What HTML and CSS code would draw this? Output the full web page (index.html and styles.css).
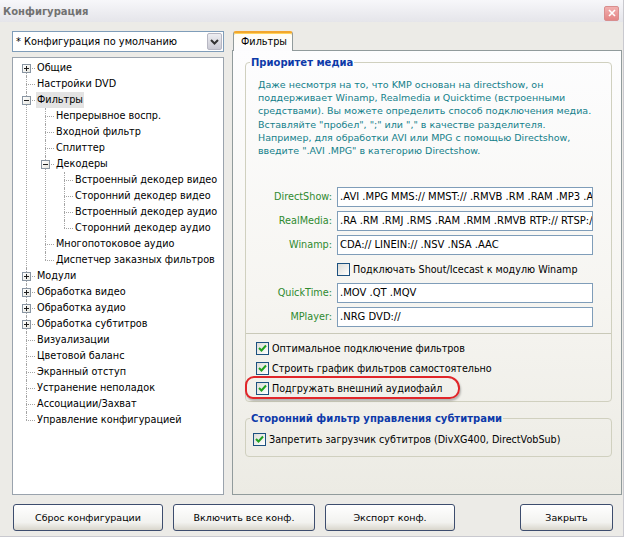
FILE: index.html
```html
<!DOCTYPE html>
<html lang="ru">
<head>
<meta charset="utf-8">
<title>Конфигурация</title>
<link rel="stylesheet" href="styles.css">
</head>
<body>
<div class="window">
  <div class="titlebar">
    <span class="title">Конфигурация</span>
    <span class="close"><svg width="8" height="8" viewBox="0 0 8 8"><path d="M1 1L7 7M7 1L1 7" stroke="#fff" stroke-width="1.6"/></svg></span>
  </div>
  <div class="main">
    <div class="left">
      <div class="combo">
        <span class="combo-text">* Конфигурация по умолчанию</span>
        <span class="combo-btn"><svg width="9" height="6" viewBox="0 0 9 6"><path d="M1 1L4.5 4.5L8 1" fill="none" stroke="#333" stroke-width="2"/></svg></span>
      </div>
      <div class="tree">
        <ul class="root">
          <li><span class="exp plus"></span><span class="lbl">Общие</span></li>
          <li><span class="lbl">Настройки DVD</span></li>
          <li><span class="exp minus"></span><span class="lbl sel">Фильтры</span>
            <ul>
              <li><span class="lbl">Непрерывное воспр.</span></li>
              <li><span class="lbl">Входной фильтр</span></li>
              <li><span class="lbl">Сплиттер</span></li>
              <li><span class="exp minus"></span><span class="lbl">Декодеры</span>
                <ul>
                  <li><span class="lbl">Встроенный декодер видео</span></li>
                  <li><span class="lbl">Сторонний декодер видео</span></li>
                  <li><span class="lbl">Встроенный декодер аудио</span></li>
                  <li><span class="lbl">Сторонний декодер аудио</span></li>
                </ul>
              </li>
              <li><span class="lbl">Многопотоковое аудио</span></li>
              <li><span class="lbl">Диспетчер заказных фильтров</span></li>
            </ul>
          </li>
          <li><span class="exp plus"></span><span class="lbl">Модули</span></li>
          <li><span class="exp plus"></span><span class="lbl">Обработка видео</span></li>
          <li><span class="exp plus"></span><span class="lbl">Обработка аудио</span></li>
          <li><span class="exp plus"></span><span class="lbl">Обработка субтитров</span></li>
          <li><span class="lbl">Визуализации</span></li>
          <li><span class="lbl">Цветовой баланс</span></li>
          <li><span class="lbl">Экранный отступ</span></li>
          <li><span class="lbl">Устранение неполадок</span></li>
          <li><span class="lbl">Ассоциации/Захват</span></li>
          <li><span class="lbl">Управление конфигурацией</span></li>
        </ul>
      </div>
    </div>
    <div class="right">
      <div class="tabs"><div class="tab">Фильтры</div></div>
      <div class="panel">
        <fieldset class="group g1">
          <legend>Приоритет медиа</legend>
          <p class="desc">Даже несмотря на то, что KMP основан на directshow, он<br>поддерживает Winamp, Realmedia и Quicktime (встроенными<br>средствами). Вы можете определить способ подключения медиа.<br>Вставляйте "пробел", ";" или "," в качестве разделителя.<br>Например, для обработки AVI или MPG с помощью Directshow,<br>введите ".AVI .MPG" в категорию Directshow.</p>
          <div class="form">
            <span class="flabel">DirectShow:</span><div class="input">.AVI .MPG MMS:// MMST:// .RMVB .RM .RAM .MP3 .AAC .OGG</div>
            <span class="flabel">RealMedia:</span><div class="input">.RA .RM .RMJ .RMS .RAM .RMM .RMVB RTP:// RTSP://</div>
            <span class="flabel">Winamp:</span><div class="input">CDA:// LINEIN:// .NSV .NSA .AAC</div>
            <span></span><label class="check"><span class="box"></span>Подключать Shout/Icecast к модулю Winamp</label>
            <span class="flabel">QuickTime:</span><div class="input">.MOV .QT .MQV</div>
            <span class="flabel">MPlayer:</span><div class="input">.NRG DVD://</div>
          </div>
          <div class="sep"></div>
          <div class="checks">
            <label class="check"><span class="box on"><svg width="9" height="8" viewBox="0 0 9 8"><path d="M1 4L3.5 6.5L8 1.5" fill="none" stroke="#21a121" stroke-width="2"/></svg></span>Оптимальное подключение фильтров</label>
            <label class="check"><span class="box on"><svg width="9" height="8" viewBox="0 0 9 8"><path d="M1 4L3.5 6.5L8 1.5" fill="none" stroke="#21a121" stroke-width="2"/></svg></span>Строить график фильтров самостоятельно</label>
            <label class="check marked"><span class="box on"><svg width="9" height="8" viewBox="0 0 9 8"><path d="M1 4L3.5 6.5L8 1.5" fill="none" stroke="#21a121" stroke-width="2"/></svg></span>Подгружать внешний аудиофайл<span class="ring"></span></label>
          </div>
        </fieldset>
        <fieldset class="group g2">
          <legend>Сторонний фильтр управления субтитрами</legend>
          <label class="check"><span class="box on"><svg width="9" height="8" viewBox="0 0 9 8"><path d="M1 4L3.5 6.5L8 1.5" fill="none" stroke="#21a121" stroke-width="2"/></svg></span>Запретить загрузчик субтитров (DivXG400, DirectVobSub)</label>
        </fieldset>
      </div>
    </div>
  </div>
  <div class="buttons">
    <button class="btn b1">Сброс конфигурации</button>
    <button class="btn b2">Включить все конф.</button>
    <button class="btn b3">Экспорт конф.</button>
    <button class="btn b4">Закрыть</button>
  </div>
</div>
</body>
</html>
```

FILE: styles.css
```css
html, body {
  margin: 0;
  padding: 0;
  background: #ffffff;
}
body {
  font-family: "DejaVu Sans", "Liberation Sans", sans-serif;
  font-size: 9.7px;
  color: #000;
}
.window {
  width: 624px;
  height: 537px;
  background: #ecebe7;
  display: flex;
  flex-direction: column;
  overflow: hidden;
  border-right: 1px solid #c9c9cf;
  border-bottom: 1px solid #c9c9cf;
  box-sizing: border-box;
}
.titlebar {
  height: 22px;
  flex: none;
  background: linear-gradient(#f7f7fa, #e5e5ea);
  display: flex;
  align-items: center;
  justify-content: space-between;
  padding: 0 4px 0 3px;
  box-sizing: border-box;
}
.title {
  font-weight: bold;
  font-size: 10px;
  color: #727272;
}
.close {
  width: 15px;
  height: 15px;
  box-sizing: border-box;
  background: linear-gradient(#f2b1b1, #e48585);
  border: 1px solid #d88e8e;
  border-radius: 2px;
  display: flex;
  align-items: center;
  justify-content: center;
  margin-top: 4px;
}
.main {
  display: flex;
  gap: 8px;
  padding: 9px 0 0 12px;
}
.left {
  width: 212px;
  display: flex;
  flex-direction: column;
  gap: 5px;
}
.combo {
  height: 21px;
  box-sizing: border-box;
  border: 1px solid #7f9db9;
  background: #fff;
  display: flex;
  align-items: center;
  padding: 0 1px 0 3px;
  font-size: 9.8px;
}
.combo-btn {
  margin-left: auto;
  width: 15px;
  height: 17px;
  box-sizing: border-box;
  background: linear-gradient(#eeeef2, #c9c9d3);
  border: 1px solid #b7b7c3;
  border-radius: 2px;
  display: flex;
  align-items: center;
  justify-content: center;
}
.tree {
  height: 438px;
  box-sizing: border-box;
  border: 1px solid #9aa3ad;
  background: #fff;
  padding-top: 2px;
  font-size: 9.7px;
}
.tree ul {
  list-style: none;
  margin: 0;
  padding: 0 0 0 8px;
}
.tree ul.root {
  padding-left: 13px;
}
.tree li {
  position: relative;
  padding-left: 11px;
}
.tree li::before {
  content: "";
  position: absolute;
  left: 0;
  top: 8px;
  width: 9px;
  border-top: 1px dotted #a5a5a5;
}
.tree li::after {
  content: "";
  position: absolute;
  left: 0;
  top: 0;
  bottom: 0;
  border-left: 1px dotted #a5a5a5;
}
.tree li:last-child::after {
  bottom: auto;
  height: 8px;
}
.tree ul.root > li:first-child::after {
  top: 8px;
}
.lbl {
  display: inline-block;
  height: 16px;
  line-height: 16px;
  padding: 0 1px;
  margin-left: -1px;
  white-space: nowrap;
}
.lbl.sel {
  background: #e3e3e3;
}
.exp {
  position: absolute;
  left: -4px;
  top: 4px;
  width: 9px;
  height: 9px;
  box-sizing: border-box;
  border: 1px solid #8a96a3;
  background: linear-gradient(135deg, #ffffff, #e6e6e0);
  z-index: 1;
}
.exp::before {
  content: "";
  position: absolute;
  left: 1px;
  top: 3px;
  width: 5px;
  height: 1px;
  background: #1f1f1f;
}
.exp.plus::after {
  content: "";
  position: absolute;
  left: 3px;
  top: 1px;
  width: 1px;
  height: 5px;
  background: #1f1f1f;
}
.right {
  width: 390px;
  display: flex;
  flex-direction: column;
}
.tabs {
  height: 19px;
  display: flex;
  padding-left: 1px;
  position: relative;
  z-index: 2;
}
.tab {
  width: 60px;
  height: 20px;
  box-sizing: border-box;
  border: 1px solid #919b9c;
  border-bottom: none;
  border-top: 2px solid #f2a72e;
  border-radius: 3px 3px 0 0;
  background: linear-gradient(#fffdf5, #fcfcfe);
  padding: 3px 0 0 7px;
  font-size: 9.7px;
  box-shadow: inset 0 1px 0 #ffd35a;
}
.panel {
  height: 445px;
  box-sizing: border-box;
  border: 1px solid #919b9c;
  background: linear-gradient(#fdfdfe, #f6f5f1 55%, #ecebe4);
  padding: 6px 9px 0 12px;
}
.group {
  margin: 0;
  border: 1px solid #d0d0bf;
  border-radius: 4px;
  padding: 0;
  min-width: 0;
}
.group legend {
  color: #0d3aa9;
  font-weight: bold;
  font-size: 10px;
  padding: 0 1px;
  margin-left: 4px;
}
.desc {
  margin: 10px 0 0 12px;
  color: #13808a;
  line-height: 13.2px;
  white-space: nowrap;
  font-size: 9.5px;
}
.form {
  display: grid;
  grid-template-columns: 86px 256px;
  grid-auto-rows: 20px;
  column-gap: 5px;
  row-gap: 4px;
  margin-top: 30px;
}
.flabel {
  color: #2f8a2f;
  text-align: right;
  line-height: 20px;
  font-size: 9.7px;
}
.input {
  border: 1px solid #7f9db9;
  background: #fff;
  box-sizing: border-box;
  overflow: hidden;
  white-space: nowrap;
  padding: 0 2px;
  line-height: 18px;
  font-size: 10px;
}
.check {
  display: flex;
  align-items: center;
  height: 20px;
  white-space: nowrap;
  font-size: 9.6px;
  position: relative;
}
.box {
  width: 13px;
  height: 13px;
  box-sizing: border-box;
  border: 1px solid #1c5180;
  background: linear-gradient(135deg, #dcdcd7, #ffffff);
  margin-right: 3px;
  display: flex;
  align-items: center;
  justify-content: center;
  flex: none;
}
.sep {
  border-top: 1px solid #c9c9b8;
  margin-top: 6px;
}
.checks {
  padding: 4px 0 3px 10px;
}
.ring {
  position: absolute;
  left: -11px;
  top: -2px;
  width: 215px;
  height: 23px;
  box-sizing: border-box;
  border: 2px solid #e0262a;
  border-radius: 9px 12px 10px 8px;
  box-shadow: 1px 2px 2px rgba(0, 0, 0, 0.25);
}
.g2 {
  margin-top: 11px;
  padding: 0 0 7px 0;
}
.g2 .check {
  margin: 5px 0 0 7px;
}
.buttons {
  display: flex;
  padding: 9px 10px 0 13px;
  gap: 10px;
}
.btn {
  height: 27px;
  border: 1px solid #3d4d6e;
  border-radius: 3px;
  background: linear-gradient(#ffffff, #f2f2ef 70%, #d9d6cc);
  font-family: "DejaVu Sans", "Liberation Sans", sans-serif;
  font-size: 9.5px;
  color: #000;
  padding: 0;
}
.b1 { width: 150px; }
.b2 { width: 142px; }
.b3 { width: 130px; }
.b4 { width: 93px; margin-left: auto; }
```
